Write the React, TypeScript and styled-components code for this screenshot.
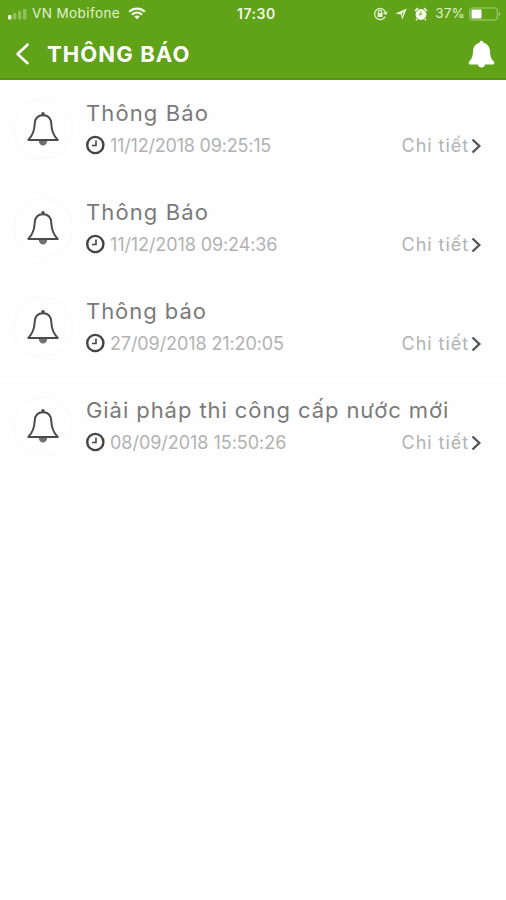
import React from "react";
import styled, { createGlobalStyle } from "styled-components";

const GlobalStyle = createGlobalStyle`
  * { box-sizing: border-box; }
  body { margin: 0; background: #fefefe; font-family: Inter, "Noto Sans", sans-serif; }
  svg { display: block; flex: none; }
`;

const Screen = styled.main`
  width: 506px;
  height: 900px;
  overflow: hidden;
  background: #fefefe;
`;

const Header = styled.header`
  height: 80px;
  background: #60a319;
  border-bottom: 2px solid #579512;
  color: #fff;
`;

const StatusBar = styled.div`
  height: 27px;
  display: grid;
  grid-template-columns: 1fr 40px 1fr;
  align-items: center;
  color: #e1f1cc;
  font-size: 13.5px;
  line-height: 27px;
`;

const StatusLeft = styled.div`
  display: flex;
  align-items: center;
  padding-left: 7px;
`;

const Carrier = styled.span`
  width: 96px;
  margin-left: 4px;
  letter-spacing: 0.4px;
  white-space: nowrap;
`;

const Clock = styled.span`
  padding-left: 4px;
  font-weight: 600;
  font-size: 14px;
  letter-spacing: 0.5px;
  color: #eff8e2;
  white-space: nowrap;
`;

const StatusRight = styled.div`
  display: flex;
  justify-content: flex-end;
  align-items: center;
  padding-right: 4px;
`;

const StatusGap = styled.span`
  width: 7px;
`;

const Percent = styled.span`
  margin: 0 4px 0 7px;
  letter-spacing: 0.2px;
`;

const NavBar = styled.div`
  height: 51px;
  display: flex;
  align-items: center;
  padding: 2px 11px 0 14px;
`;

const PageTitle = styled.h1`
  flex: 1;
  margin: 0 0 0 16px;
  font-size: 22px;
  font-weight: 700;
  line-height: 28px;
  letter-spacing: 1.1px;
`;

const List = styled.ul`
  margin: 0;
  padding: 0;
  list-style: none;
`;

const Row = styled.li`
  height: 99px;
  display: flex;
  border-bottom: 1px solid #fcfcfc;
`;

const Badge = styled.div`
  width: 60px;
  height: 60px;
  margin: 19px 13px 0;
  display: flex;
  align-items: center;
  justify-content: center;
  border: 1px solid #fbfbfb;
  border-radius: 50%;
`;

const Body = styled.div`
  flex: 1;
  padding: 18px 24px 0 0;
`;

const Title = styled.h2<{ $tracking: number }>`
  margin: 0;
  font-size: 22px;
  font-weight: 400;
  line-height: 30px;
  color: #7a7a7a;
  letter-spacing: ${(p) => p.$tracking}px;
  white-space: nowrap;
`;

const Meta = styled.div`
  display: flex;
  align-items: center;
  height: 24px;
  margin-top: 5px;
  margin-left: -1px;
  font-size: 18px;
  font-weight: 400;
  color: #b2b2b2;
`;

const DateText = styled.time<{ $tracking: number }>`
  flex: 1;
  margin-left: 5px;
  letter-spacing: ${(p) => p.$tracking}px;
`;

const Detail = styled.span`
  margin-right: 2px;
  letter-spacing: 0.95px;
`;

const SignalIcon = () => (
  <svg width="21" height="12" viewBox="0 0 21 12" fill="#e9f6d8">
    <rect x="1" y="7" width="3.5" height="4.5" rx="1" />
    <g opacity=".35">
      <rect x="6" y="5" width="3.3" height="6.5" rx="1" />
      <rect x="11" y="3" width="3.3" height="8.5" rx="1" />
      <rect x="16" y="1" width="3.5" height="10.5" rx="1" />
    </g>
  </svg>
);

const WifiIcon = () => (
  <svg width="18" height="13" viewBox="0 0 18 13" fill="none" stroke="#f3fbe6" strokeWidth="2.3">
    <path d="M1.2 4.7C5.5.5 12.5.5 16.8 4.7M4 7.7c2.9-2.7 7.1-2.7 10 0" />
    <path d="M9 12.2 6.3 9.5c1.6-1.3 3.8-1.3 5.4 0z" fill="#f3fbe6" stroke="none" />
  </svg>
);

const LockIcon = () => (
  <svg width="15" height="14" viewBox="0 0 15 14" fill="none" stroke="#e1f1cc" strokeWidth="1.3">
    <path d="M12.2 9.6A5.6 5.6 0 1 1 12.7 6M10.6 5.8l2.3 1.2 1.2-2.3" />
    <path d="M5.4 6.5V5a1.7 1.7 0 0 1 3.4 0V6.5" />
    <rect x="4.6" y="6" width="5" height="4" fill="#e1f1cc" stroke="none" />
  </svg>
);

const LocationIcon = () => (
  <svg width="12" height="12" viewBox="0 0 12 12" fill="#e9f6d8">
    <path d="M11.8.5 7.2 11.7 6 6.5.3 5.4z" />
    <path d="M9 3.3 7 8.2 6.7 5.8z" fill="#60a319" />
  </svg>
);

const AlarmIcon = () => (
  <svg width="14" height="14" viewBox="0 0 14 14">
    <circle cx="7" cy="7.5" r="5.4" fill="#f3fbe6" />
    <path d="M1 4 4 1.2M13 4 10 1.2M3 12l-1 1.2M11 12l1 1.2" stroke="#f3fbe6" strokeWidth="1.7" />
    <path d="M7 4.5v3.2H4.8" stroke="#60a319" strokeWidth="1" fill="none" />
  </svg>
);

const BatteryIcon = () => (
  <svg width="33" height="14" viewBox="0 0 33 14">
    <rect x=".8" y="1" width="27.5" height="12" rx="2" fill="none" stroke="#a8d078" strokeWidth="1" />
    <rect x="2.5" y="2.5" width="10" height="9" rx="1" fill="#fff" />
    <path d="M29.7 5c2 .6 2 3.4 0 4z" fill="#a8d078" />
  </svg>
);

const BackIcon = () => (
  <svg width="17" height="24" viewBox="0 0 17 24" fill="none" stroke="#fff" strokeWidth="2.6" strokeLinecap="round" strokeLinejoin="round">
    <path d="M13.5 2.7 3.6 12l9.9 9.2" />
  </svg>
);

const SolidBellIcon = () => (
  <svg width="27" height="28" viewBox="0 0 27 28" fill="#fff">
    <path d="M13.5.8c1.2 0 1.9.8 2 2 4.1 1 6.3 4.2 6.5 8.5.3 5.5 1.1 7.6 3.8 10.3.9.9.6 2.9-.6 2.9H1.8c-1.2 0-1.5-2-.6-2.9C3.9 18.9 4.7 16.800 5 11.300c.2-4.300 2.400-7.500 6.500-8.500.1-1.200.8-2 2-2zM9.700 24.300h7.600c-.4 2-1.800 3.100-3.800 3.100s-3.400-1.100-3.800-3.100z" />
  </svg>
);

const OutlineBellIcon = () => (
  <svg width="34" height="36" viewBox="0 0 34 36" fill="none" stroke="#4b4b4b" strokeWidth="2" strokeLinejoin="round">
    <path d="M17 4.2C11.5 4.2 8.9 7.8 8.7 13 8.4 19.8 6.6 24.6 2.3 28.9H31.7C27.4 24.6 25.6 19.8 25.3 13 25.1 7.8 22.5 4.2 17 4.2Z" />
    <circle cx="17" cy="2.7" r="1.8" fill="#4b4b4b" stroke="none" />
    <path d="M12.8 30h8.4c-.3 2.8-1.9 4.6-4.2 4.6s-3.9-1.800-4.200-4.600z" fill="#707070" stroke="none" />
  </svg>
);

const TimeIcon = () => (
  <svg width="20" height="20" viewBox="0 0 20 20" fill="none" stroke="#444">
    <circle cx="10.3" cy="10" r="8.1" strokeWidth="2.4" />
    <path d="M11 5.5v5H7" strokeWidth="1.6" />
  </svg>
);

const ForwardIcon = () => (
  <svg width="11" height="17" viewBox="0 0 11 17" fill="none" stroke="#555" strokeWidth="2.4">
    <path d="M1.5 2.5 8.3 9 1.5 15.5" />
  </svg>
);

const notices = [
  { title: "Thông Báo", titleTracking: 1.1, date: "11/12/2018 09:25:15", dateTracking: -0.2 },
  { title: "Thông Báo", titleTracking: 1.1, date: "11/12/2018 09:24:36", dateTracking: -0.1 },
  { title: "Thông báo", titleTracking: 0.95, date: "27/09/2018 21:20:05", dateTracking: -0.1 },
  { title: "Giải pháp thi công cấp nước mới", titleTracking: 0.93, date: "08/09/2018 15:50:26", dateTracking: -0.03 },
];

export default function App() {
  return (
    <Screen>
      <GlobalStyle />
      <Header>
        <StatusBar>
          <StatusLeft>
            <SignalIcon />
            <Carrier>VN Mobifone</Carrier>
            <WifiIcon />
          </StatusLeft>
          <Clock>17:30</Clock>
          <StatusRight>
            <LockIcon />
            <StatusGap />
            <LocationIcon />
            <StatusGap />
            <AlarmIcon />
            <Percent>37%</Percent>
            <BatteryIcon />
          </StatusRight>
        </StatusBar>
        <NavBar>
          <BackIcon />
          <PageTitle>THÔNG BÁO</PageTitle>
          <SolidBellIcon />
        </NavBar>
      </Header>
      <List>
        {notices.map((n) => (
          <Row key={n.date}>
            <Badge>
              <OutlineBellIcon />
            </Badge>
            <Body>
              <Title $tracking={n.titleTracking}>{n.title}</Title>
              <Meta>
                <TimeIcon />
                <DateText $tracking={n.dateTracking}>{n.date}</DateText>
                <Detail>Chi tiết</Detail>
                <ForwardIcon />
              </Meta>
            </Body>
          </Row>
        ))}
      </List>
    </Screen>
  );
}
